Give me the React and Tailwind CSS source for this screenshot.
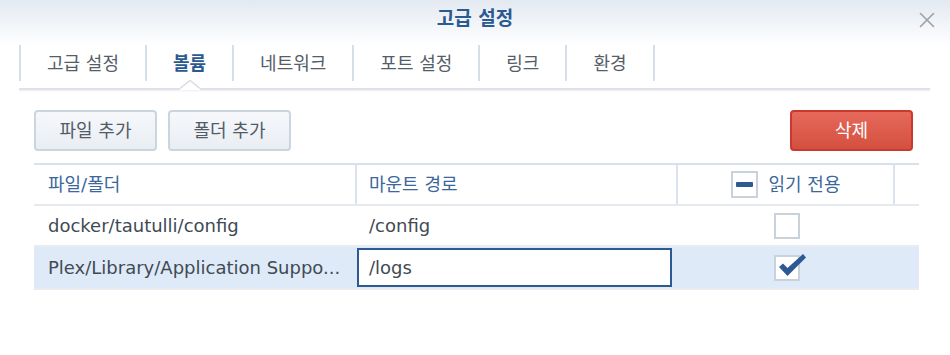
import { X } from "lucide-react";

const TABS = ["고급 설정", "볼륨", "네트워크", "포트 설정", "링크", "환경"];
const ACTIVE = 1;

const FONT = "font-['DejaVu_Sans','Noto_Sans_CJK_KR',sans-serif]";

function Checkbox({ checked }) {
  return (
    <div className="relative w-[26px] h-[26px] border-2 border-[#c9d1db] bg-white">
      {checked && (
        <svg className="absolute -top-[6px] left-[1px] w-[30px] h-[28px]" viewBox="0 0 30 28">
          <path d="M2 16 L6 12.5 L10.5 17 L26 3 L29 6.5 L10.5 25 Z" fill="#2d5a92" />
        </svg>
      )}
    </div>
  );
}

const App = () => {
  return (
    <div className={`w-[950px] h-[355px] bg-white text-[18px] ${FONT}`}>
      {/* Title bar */}
      <div className="relative h-[45px] bg-gradient-to-b from-[#e3e9f1] to-white flex items-center justify-center">
        <span className="text-[19px] font-bold text-[#2b5a91] -mt-[8px]">고급 설정</span>
        <X className="absolute right-[10px] top-[7px] w-[26px] h-[26px] text-[#9aa2ab]" strokeWidth={1.5} />
      </div>

      {/* Tabs */}
      <div className="mx-[19px]">
        <div className="flex h-[36px]">
          {TABS.map((t, i) => (
            <div
              key={t}
              className={`flex items-center px-[26px] border-l-2 border-[#d5dee9] ${i === TABS.length - 1 ? "border-r-2" : ""} ${
                i === ACTIVE ? "font-bold text-[#2b5a91]" : "text-[#555e68]"
              }`}
            >
              {t}
            </div>
          ))}
        </div>
        <div className="relative mt-[7px] mr-[1px] h-[2px] bg-[#dde2e8] shadow-[0_1px_2px_rgba(0,0,0,0.08)]">
          <svg className="absolute left-[161px] -top-[8px] w-[20px] h-[10px]" viewBox="0 0 20 10">
            <path d="M0 8 L10 0 L20 8 L20 10 L0 10 Z" fill="white" />
            <path d="M0 8.5 L10 0.5 L20 8.5" fill="none" stroke="#d8dde3" strokeWidth="1.5" />
          </svg>
        </div>
      </div>

      {/* Toolbar */}
      <div className="mx-[34px] mt-[20px] mr-[37px] flex items-center gap-[11px]">
        <button className="w-[123px] h-[41px] rounded-[4px] border-2 border-[#cbd5e0] bg-gradient-to-b from-[#f6f8fb] to-[#e9eef4] text-[#535c66]">
          파일 추가
        </button>
        <button className="w-[123px] h-[41px] rounded-[4px] border-2 border-[#cbd5e0] bg-gradient-to-b from-[#f6f8fb] to-[#e9eef4] text-[#535c66]">
          폴더 추가
        </button>
        <button className="ml-auto w-[123px] h-[41px] rounded-[4px] border-2 border-[#c9392f] bg-gradient-to-b from-[#e6695b] to-[#d3503f] text-white">
          삭제
        </button>
      </div>

      {/* Table */}
      <div className="ml-[34px] mt-[12px] w-[885px] border-t-2 border-[#d8e2ed]">
        <div className="grid grid-cols-[323px_321px_217px_1fr] h-[41px] border-b-2 border-[#e6eaee] text-[#3b679c]">
          <div className="flex items-center pl-[14px] border-r-2 border-[#dbe4ee]">파일/폴더</div>
          <div className="flex items-center pl-[12px] border-r-2 border-[#dbe4ee]">마운트 경로</div>
          <div className="flex items-center justify-center gap-[11px] border-r-2 border-[#dbe4ee]">
            <div className="w-[27px] h-[27px] border-2 border-[#c9d1db] bg-white flex items-center justify-center">
              <div className="w-[17px] h-[5px] rounded-[1px] bg-[#2d5a92]" />
            </div>
            <span>읽기 전용</span>
          </div>
          <div />
        </div>

        <div className="grid grid-cols-[323px_321px_217px_1fr] h-[41px] border-b-2 border-[#e8ecf0] text-[#414a54]">
          <div className="flex items-center pl-[14px]">docker/tautulli/config</div>
          <div className="flex items-center pl-[12px]">/config</div>
          <div className="flex items-center justify-center">
            <Checkbox />
          </div>
          <div />
        </div>

        <div className="grid grid-cols-[323px_321px_217px_1fr] h-[43px] border-b-2 border-[#e8ecf0] bg-[#dfeaf8] text-[#414a54]">
          <div className="flex items-center pl-[14px] whitespace-nowrap">Plex/Library/Application Suppo...</div>
          <div className="py-px pr-[6px]">
            <div className="h-full border-2 border-[#2d5a92] bg-white flex items-center pl-[10px]">/logs</div>
          </div>
          <div className="flex items-center justify-center">
            <Checkbox checked />
          </div>
          <div />
        </div>
      </div>
    </div>
  );
};

export default App;
